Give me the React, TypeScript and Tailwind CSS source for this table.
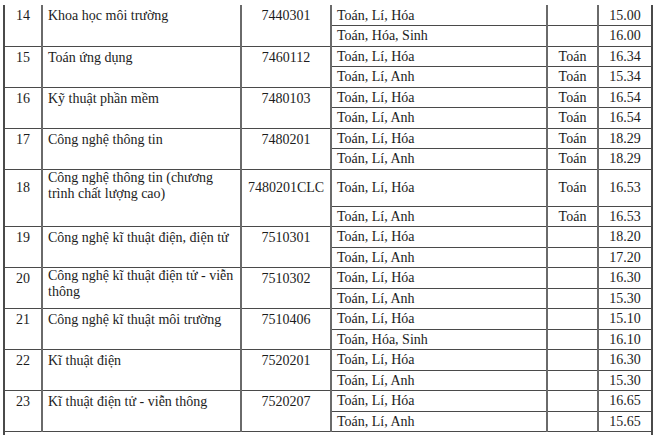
type Group = {
  no: string;
  name: string[];
  code: string;
  tall?: boolean;
  rows: [string, string, string][];
};

const groups: Group[] = [
  {
    no: "14",
    name: ["Khoa học môi trường"],
    code: "7440301",
    rows: [
      ["Toán, Lí, Hóa", "", "15.00"],
      ["Toán, Hóa, Sinh", "", "16.00"],
    ],
  },
  {
    no: "15",
    name: ["Toán ứng dụng"],
    code: "7460112",
    rows: [
      ["Toán, Lí, Hóa", "Toán", "16.34"],
      ["Toán, Lí, Anh", "Toán", "15.34"],
    ],
  },
  {
    no: "16",
    name: ["Kỹ thuật phần mềm"],
    code: "7480103",
    rows: [
      ["Toán, Lí, Hóa", "Toán", "16.54"],
      ["Toán, Lí, Anh", "Toán", "16.54"],
    ],
  },
  {
    no: "17",
    name: ["Công nghệ thông tin"],
    code: "7480201",
    rows: [
      ["Toán, Lí, Hóa", "Toán", "18.29"],
      ["Toán, Lí, Anh", "Toán", "18.29"],
    ],
  },
  {
    no: "18",
    name: ["Công nghệ thông tin (chương", "trình chất lượng cao)"],
    code: "7480201CLC",
    tall: true,
    rows: [
      ["Toán, Lí, Hóa", "Toán", "16.53"],
      ["Toán, Lí, Anh", "Toán", "16.53"],
    ],
  },
  {
    no: "19",
    name: ["Công nghệ kĩ thuật điện, điện tử"],
    code: "7510301",
    rows: [
      ["Toán, Lí, Hóa", "", "18.20"],
      ["Toán, Lí, Anh", "", "17.20"],
    ],
  },
  {
    no: "20",
    name: ["Công nghệ kĩ thuật điện tử - viễn", "thông"],
    code: "7510302",
    rows: [
      ["Toán, Lí, Hóa", "", "16.30"],
      ["Toán, Lí, Anh", "", "15.30"],
    ],
  },
  {
    no: "21",
    name: ["Công nghệ kĩ thuật môi trường"],
    code: "7510406",
    rows: [
      ["Toán, Lí, Hóa", "", "15.10"],
      ["Toán, Hóa, Sinh", "", "16.10"],
    ],
  },
  {
    no: "22",
    name: ["Kĩ thuật điện"],
    code: "7520201",
    rows: [
      ["Toán, Lí, Hóa", "", "16.30"],
      ["Toán, Lí, Anh", "", "15.30"],
    ],
  },
  {
    no: "23",
    name: ["Kĩ thuật điện tử - viễn thông"],
    code: "7520207",
    rows: [
      ["Toán, Lí, Hóa", "", "16.65"],
      ["Toán, Lí, Anh", "", "15.65"],
    ],
  },
];

const cell = "border-x-2 border-x-[#6a6a6a] border-b border-b-[#4a4a4a] p-0";

function SubCells({ row }: { row: [string, string, string] }) {
  return (
    <>
      <td className={`${cell} align-middle pl-[5px] whitespace-nowrap`}>{row[0]}</td>
      <td className={`${cell} align-middle text-center`}>{row[1]}</td>
      <td className={`${cell} align-middle text-center border-r-[#4a4a4a]`}>{row[2]}</td>
    </>
  );
}

export default function App() {
  return (
    <div className="min-h-[435px] bg-white pl-[3px] pt-[5px] text-[14px] leading-[17px] text-[#1c1c1c] [font-family:'Liberation_Serif','Times_New_Roman',serif]">
      <table className="w-[648px] table-fixed border-collapse">
        <colgroup>
          <col className="w-[38px]" />
          <col className="w-[199px]" />
          <col className="w-[90px]" />
          <col className="w-[216px]" />
          <col className="w-[51px]" />
          <col className="w-[54px]" />
        </colgroup>
        <tbody>
          {groups.map((g) => {
            const twoLines = g.name.length > 1;
            return [
              <tr key={g.no + "a"} className={g.tall ? "h-[37px]" : "h-[20.5px]"}>
                <td
                  rowSpan={2}
                  className={`${cell} border-l-[#4a4a4a] align-top text-center ${g.tall ? "pt-[9px]" : "pt-[2px]"}`}
                >
                  {g.no}
                </td>
                <td
                  rowSpan={2}
                  className={`${cell} align-top pl-[5px] whitespace-nowrap ${twoLines ? "pt-0 leading-[16px]" : "pt-[2px]"}`}
                >
                  {g.name.map((line, i) => (
                    <div key={i}>{line}</div>
                  ))}
                </td>
                <td
                  rowSpan={2}
                  className={`${cell} align-top text-center whitespace-nowrap ${g.tall ? "pt-[9px]" : "pt-[2px]"}`}
                >
                  {g.code}
                </td>
                <SubCells row={g.rows[0]} />
              </tr>,
              <tr key={g.no + "b"} className="h-[20.5px]">
                <SubCells row={g.rows[1]} />
              </tr>,
            ];
          })}
          <tr className="h-[20px]">
            <td colSpan={6} className="border-x-2 border-x-[#4a4a4a] p-0" />
          </tr>
        </tbody>
      </table>
    </div>
  );
}
